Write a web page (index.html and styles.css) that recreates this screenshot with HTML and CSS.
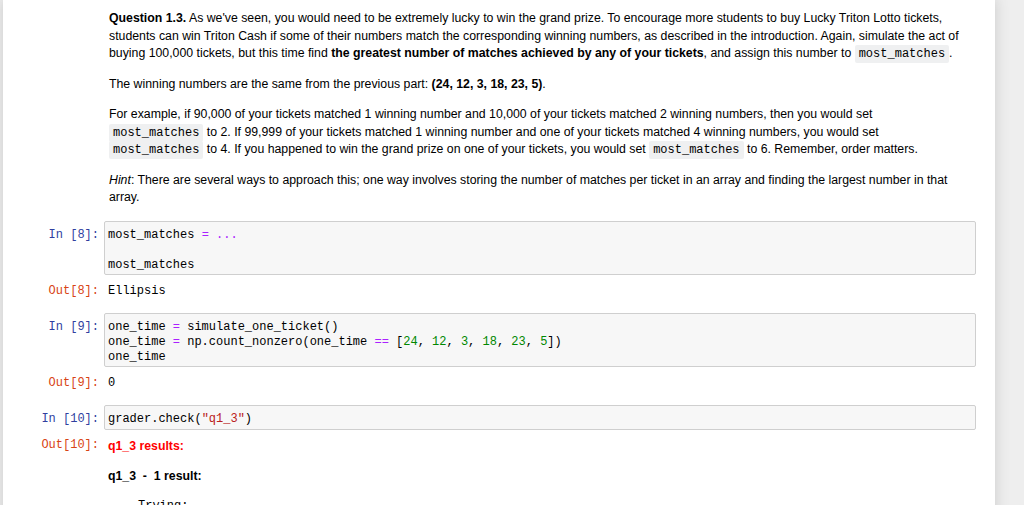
FILE: index.html
```html
<!DOCTYPE html>
<html>
<head>
<meta charset="utf-8">
<link rel="stylesheet" href="styles.css">
</head>
<body>
<div class="notebook">
  <div class="cell md-cell">
    <div class="prompt"></div>
    <div class="md">
      <p><strong>Question 1.3.</strong> As we've seen, you would need to be extremely lucky to win the grand prize. To encourage more students to buy Lucky Triton Lotto tickets, students can win Triton Cash if some of their numbers match the corresponding winning numbers, as described in the introduction. Again, simulate the act of buying 100,000 tickets, but this time find <strong>the greatest number of matches achieved by any of your tickets</strong>, and assign this number to <code>most_matches</code>.</p>
      <p>The winning numbers are the same from the previous part: <strong>(24, 12, 3, 18, 23, 5)</strong>.</p>
      <p>For example, if 90,000 of your tickets matched 1 winning number and 10,000 of your tickets matched 2 winning numbers, then you would set <code>most_matches</code> to 2. If 99,999 of your tickets matched 1 winning number and one of your tickets matched 4 winning numbers, you would set <code>most_matches</code> to 4. If you happened to win the grand prize on one of your tickets, you would set <code>most_matches</code> to 6. Remember, order matters.</p>
      <p><em>Hint</em>: There are several ways to approach this; one way involves storing the number of matches per ticket in an array and finding the largest number in that array.</p>
    </div>
  </div>

  <div class="cell code-cell">
    <div class="row">
      <div class="prompt in">In&nbsp;[8]:</div>
      <div class="input"><pre>most_matches <span class="op">=</span> <span class="op">...</span>

most_matches</pre></div>
    </div>
    <div class="row out">
      <div class="prompt outp">Out[8]:</div>
      <div class="output"><pre>Ellipsis</pre></div>
    </div>
  </div>

  <div class="cell code-cell">
    <div class="row">
      <div class="prompt in">In&nbsp;[9]:</div>
      <div class="input"><pre>one_time <span class="op">=</span> simulate_one_ticket()
one_time <span class="op">=</span> np.count_nonzero(one_time <span class="op">==</span> [<span class="num">24</span>, <span class="num">12</span>, <span class="num">3</span>, <span class="num">18</span>, <span class="num">23</span>, <span class="num">5</span>])
one_time</pre></div>
    </div>
    <div class="row out">
      <div class="prompt outp">Out[9]:</div>
      <div class="output"><pre>0</pre></div>
    </div>
  </div>

  <div class="cell code-cell">
    <div class="row">
      <div class="prompt in">In&nbsp;[10]:</div>
      <div class="input"><pre>grader.check(<span class="str">"q1_3"</span>)</pre></div>
    </div>
    <div class="row out">
      <div class="prompt outp">Out[10]:</div>
      <div class="output html-out">
        <p class="res-title">q1_3 results:</p>
        <p class="res-sub">q1_3 &nbsp;-&nbsp; 1 result:</p>
        <pre class="trying">Trying:</pre>
      </div>
    </div>
  </div>
</div>
</body>
</html>
```

FILE: styles.css
```css
html, body {
  margin: 0;
  padding: 0;
  background: #eeeeee;
  height: 505px;
  overflow: hidden;
}

.notebook {
  margin-left: 3px;
  width: 992px;
  min-height: 505px;
  box-sizing: border-box;
  background: #ffffff;
  padding: 0 19px 0 0;
  box-shadow: 0 0 12px 1px rgba(87, 87, 87, 0.2);
}

.cell {
  display: flex;
  flex-direction: column;
}

.md-cell {
  flex-direction: row;
}

.row {
  display: flex;
  flex-direction: row;
}

.prompt {
  width: 101px;
  flex: none;
  box-sizing: border-box;
  padding-right: 5px;
  text-align: right;
  font-family: "Liberation Mono", monospace;
  font-size: 12px;
  line-height: 14.75px;
}

.prompt.in {
  color: #303f9f;
  padding-top: 7px;
}

.prompt.outp {
  color: #d84315;
}

.md {
  flex: 1;
  padding: 10px 12px 0 5px;
  font-family: "Liberation Sans", Arial, sans-serif;
  font-size: 12.3px;
  line-height: 17.5px;
  color: #000;
}

.md p {
  margin: 0 0 13px 0;
}

.md p:last-child {
  margin-bottom: 0;
}

.md code {
  font-family: "Liberation Mono", monospace;
  font-size: 12px;
  line-height: 12px;
  background: #eff0f1;
  padding: 2px 4px;
  border-radius: 2px;
}

.code-cell {
  margin-top: 14.5px;
}

.md-cell + .code-cell {
  margin-top: 14.5px;
}

.input {
  flex: 1;
  background: #f7f7f7;
  border: 1px solid #cfcfcf;
  border-radius: 2px;
  padding: 6px 4px 2px 3px;
}

pre {
  margin: 0;
  font-family: "Liberation Mono", monospace;
  font-size: 12px;
  line-height: 14.75px;
  color: #000;
}

.op { color: #aa22ff; }
.num { color: #008800; }
.str { color: #ba2121; }

.row.out {
  padding-top: 8.5px;
}

.output {
  flex: 1;
  padding-left: 4px;
}

.html-out {
  font-family: "Liberation Sans", Arial, sans-serif;
  font-size: 12.3px;
  line-height: 17.5px;
}

.html-out p {
  margin: 0 0 12px 0;
  font-weight: bold;
}

.res-title {
  color: #ff0000;
}

.res-sub {
  color: #000;
}

.trying {
  margin-left: 30px;
  padding-top: 2px;
}
```
